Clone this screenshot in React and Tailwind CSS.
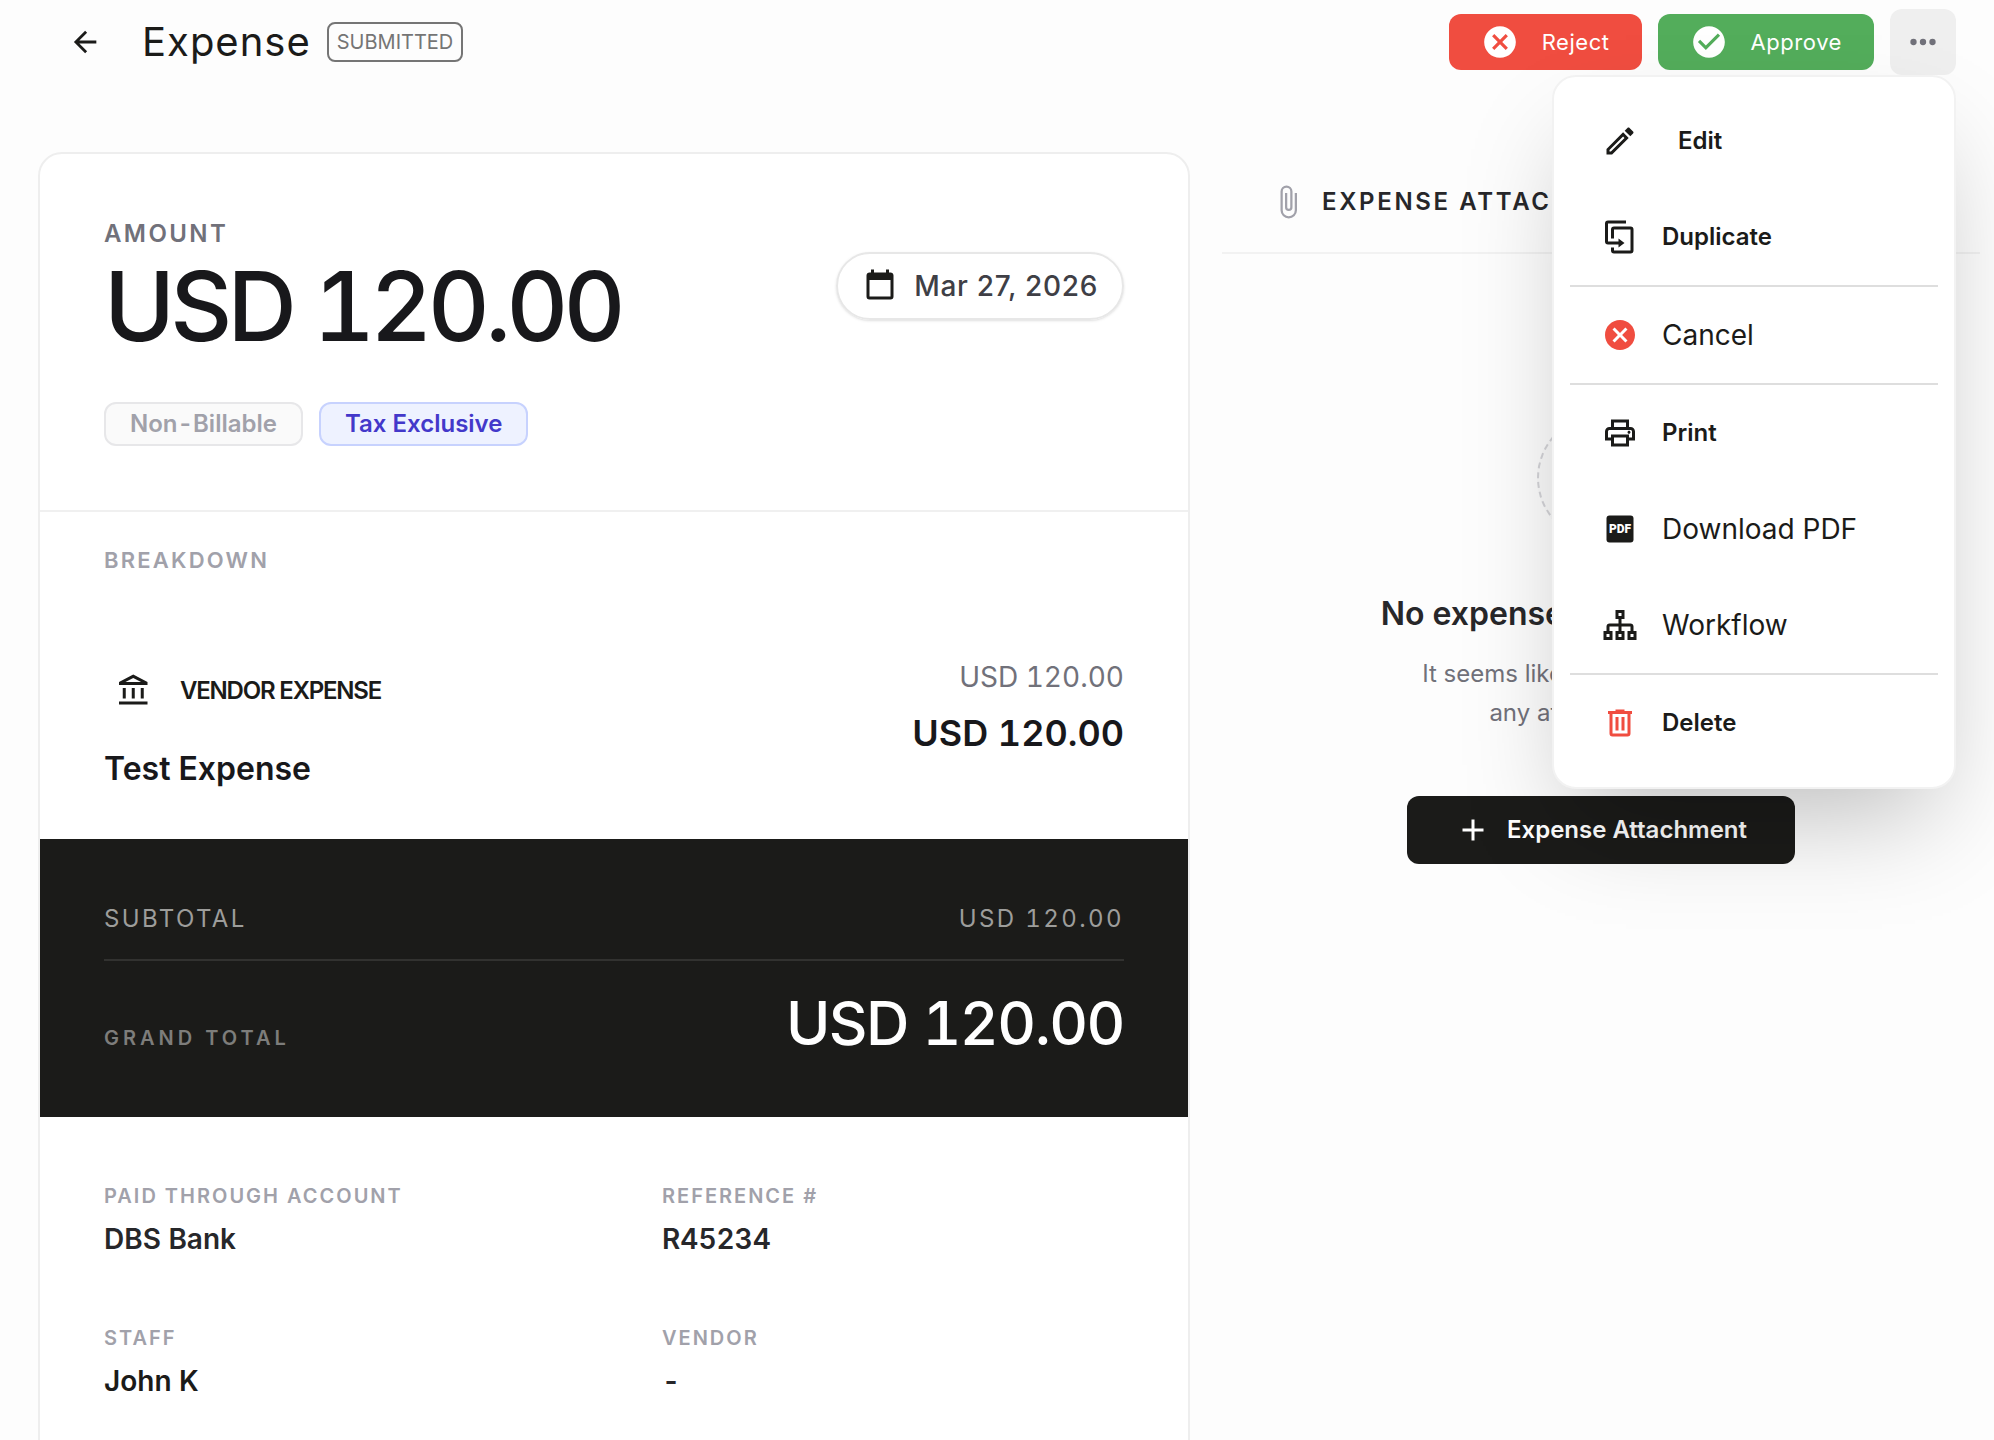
import clsx from 'clsx'

const icons = {
  arrowLeft: 'M20,11V13H8L13.5,18.5L12.08,19.92L4.16,12L12.08,4.08L13.5,5.5L8,11H20Z',
  closeCircle:
    'M12,2C17.53,2 22,6.47 22,12C22,17.53 17.53,22 12,22C6.47,22 2,17.53 2,12C2,6.47 6.47,2 12,2M15.59,7L12,10.59L8.41,7L7,8.41L10.59,12L7,15.59L8.41,17L12,13.41L15.59,17L17,15.59L13.41,12L17,8.41L15.59,7Z',
  checkCircle:
    'M12 2C6.5 2 2 6.5 2 12S6.5 22 12 22 22 17.5 22 12 17.5 2 12 2M10 17L5 12L6.41 10.59L10 14.17L17.59 6.58L19 8L10 17Z',
  dots: 'M16,12A2,2 0 0,1 18,10A2,2 0 0,1 20,12A2,2 0 0,1 18,14A2,2 0 0,1 16,12M10,12A2,2 0 0,1 12,10A2,2 0 0,1 14,12A2,2 0 0,1 12,14A2,2 0 0,1 10,12M4,12A2,2 0 0,1 6,10A2,2 0 0,1 8,12A2,2 0 0,1 6,14A2,2 0 0,1 4,12Z',
  pencil:
    'M14.06,9L15,9.94L5.92,19H5V18.08L14.06,9M17.66,3C17.41,3 17.15,3.1 16.96,3.29L15.13,5.12L18.88,8.87L20.71,7.04C21.1,6.65 21.1,6 20.71,5.63L18.37,3.29C18.17,3.09 17.92,3 17.66,3M14.06,6.19L3,17.25V21H6.75L17.81,9.94L14.06,6.19Z',
  duplicate:
    'M11,17H4A2,2 0 0,1 2,15V3A2,2 0 0,1 4,1H16V3H4V15H11V13L15,16L11,19V17M19,21V7H8V13H6V7A2,2 0 0,1 8,5H19A2,2 0 0,1 21,7V21A2,2 0 0,1 19,23H8A2,2 0 0,1 6,21V19H8V21H19Z',
  printer:
    'M19 8C20.66 8 22 9.34 22 11V17H18V21H6V17H2V11C2 9.34 3.34 8 5 8H6V3H18V8H19M8 5V8H16V5H8M16 19V15H8V19H16M18 15H20V11C20 10.45 19.55 10 19 10H5C4.45 10 4 10.45 4 11V15H6V13H18V15M19 11.5C19 12.05 18.55 12.5 18 12.5C17.45 12.5 17 12.05 17 11.5C17 10.95 17.45 10.5 18 10.5C18.55 10.5 19 10.95 19 11.5Z',
  sitemap:
    'M9,2V8H11V11H5C3.89,11 3,11.89 3,13V16H1V22H7V16H5V13H11V16H9V22H15V16H13V13H19V16H17V22H23V16H21V13C21,11.89 20.11,11 19,11H13V8H15V2H9M11,4H13V6H11V4M3,18H5V20H3V18M11,18H13V20H11V18M19,18H21V20H19V18Z',
  trash:
    'M9,3V4H4V6H5V19A2,2 0 0,0 7,21H17A2,2 0 0,0 19,19V6H20V4H15V3H9M7,6H17V19H7V6M9,8V17H11V8H9M13,8V17H15V8H13Z',
  bank: 'M6.5,10H4.5V17H6.5V10M12.5,10H10.5V17H12.5V10M21,19H2V21H21V19M18.5,10H16.5V17H18.5V10M11.5,3.26L16.71,6H6.29L11.5,3.26M11.5,1L2,6V8H21V6L11.5,1Z',
  calendar:
    'M19,19H5V8H19M16,1V3H8V1H6V3H5C3.89,3 3,3.89 3,5V19A2,2 0 0,0 5,21H19A2,2 0 0,0 21,19V5C21,3.89 20.1,3 19,3H18V1',
  paperclip:
    'M16.5,6V17.5A4,4 0 0,1 12.5,21.5A4,4 0 0,1 8.5,17.5V5A2.5,2.5 0 0,1 11,2.5A2.5,2.5 0 0,1 13.5,5V15.5A1,1 0 0,1 12.5,16.5A1,1 0 0,1 11.5,15.5V6H10V15.5A2.5,2.5 0 0,0 12.5,18A2.5,2.5 0 0,0 15,15.5V5A4,4 0 0,0 11,1A4,4 0 0,0 7,5V17.5A5.5,5.5 0 0,0 12.5,23A5.5,5.5 0 0,0 18,17.5V6H16.5Z',
  plus: 'M19,13H13V19H11V13H5V11H11V5H13V11H19V13Z',
}

function Icon({ name, className = 'size-9' }) {
  return (
    <svg viewBox="0 0 24 24" fill="currentColor" fillRule="evenodd" className={clsx('shrink-0', className)} aria-hidden="true">
      <path d={icons[name]} />
    </svg>
  )
}

function PdfIcon() {
  return (
    <svg viewBox="0 0 24 24" className="size-9 shrink-0" aria-hidden="true">
      <rect x="3" y="3" width="18" height="18" rx="2" fill="#1b1b19" />
      <text x="12" y="14.8" textAnchor="middle" fill="#fff" fontFamily="Roboto" fontWeight="900" fontSize="8">
        PDF
      </text>
    </svg>
  )
}

const menuGroups = [
  [
    { label: 'Edit', icon: 'pencil', bold: true, indent: true },
    { label: 'Duplicate', icon: 'duplicate', bold: true },
  ],
  [{ label: 'Cancel', icon: 'closeCircle', danger: true }],
  [
    { label: 'Print', icon: 'printer', bold: true },
    { label: 'Download PDF', icon: 'pdf' },
    { label: 'Workflow', icon: 'sitemap' },
  ],
  [{ label: 'Delete', icon: 'trash', bold: true, danger: true }],
]

const details = [
  { label: 'Paid Through Account', value: 'DBS Bank' },
  { label: 'Reference #', value: 'R45234' },
  { label: 'Staff', value: 'John K', strong: true },
  { label: 'Vendor', value: '-' },
]

function ActionMenu() {
  return (
    <div
      role="menu"
      className="absolute top-full right-0 z-10 w-[404px] rounded-3xl border-2 border-[#f2f2f2] bg-white p-4 shadow-[0_50px_100px_-24px_rgba(0,0,0,0.25)]"
    >
      {menuGroups.map((group, i) => (
        <div key={i} className={clsx(i > 0 && 'border-t-2 border-[#dedede]')}>
          {group.map((item) => (
            <button key={item.label} role="menuitem" className="flex h-24 w-full items-center gap-6 px-8">
              {item.icon === 'pdf' ? (
                <PdfIcon />
              ) : (
                <Icon name={item.icon} className={clsx('size-9', item.danger && 'text-[#f04d40]')} />
              )}
              <span className={clsx(item.bold ? 'text-2xl font-semibold' : 'text-[28px]', item.indent && 'pl-4')}>
                {item.label}
              </span>
            </button>
          ))}
        </div>
      ))}
    </div>
  )
}

function Header() {
  return (
    <header className="flex items-center justify-between pr-6 pl-[30px]">
      <div className="flex items-center">
        <button aria-label="Back">
          <Icon name="arrowLeft" className="size-[34px]" />
        </button>
        <h1 className="ml-10 text-[40px] leading-[48px] tracking-wide">Expense</h1>
        <span className="ml-4 flex h-10 items-center rounded-lg border-2 border-[#757575] px-2 text-xl text-[#757575]">
          SUBMITTED
        </span>
      </div>
      <div className="flex items-center gap-4 text-[22px] tracking-wide text-white">
        <button className="flex h-14 items-center gap-[23px] rounded-xl bg-[#f04d40] px-8">
          <Icon name="closeCircle" className="size-[38px]" />
          Reject
        </button>
        <button className="flex h-14 items-center gap-[23px] rounded-xl bg-[#53ad5b] px-8">
          <Icon name="checkCircle" className="size-[38px]" />
          Approve
        </button>
        <div className="relative tracking-normal text-[#1b1b19]">
          <button aria-label="More actions" className="flex size-[66px] items-center justify-center rounded-xl bg-[#efefef] text-[#71717a]">
            <Icon name="dots" className="size-[38px]" />
          </button>
          <ActionMenu />
        </div>
      </div>
    </header>
  )
}

function ExpenseCard() {
  return (
    <section className="min-w-0 overflow-hidden rounded-3xl border-2 border-[#eeeeee] bg-white">
      <div className="border-b-2 border-[#f0f0f0] p-16">
        <div className="flex items-center justify-between">
          <div>
            <p className="text-2xl leading-8 font-semibold tracking-widest text-[#71717a] uppercase">Amount</p>
            <p className="mt-2 text-8xl leading-none font-medium tracking-tighter text-[#18181b] tabular-nums">USD 120.00</p>
          </div>
          <div className="flex h-[68px] items-center gap-4 rounded-full border-2 border-[#e7e7e7] px-6 shadow-sm">
            <Icon name="calendar" />
            <time dateTime="2026-03-27" className="text-[28px] font-medium tracking-wide text-[#3f3f46]">
              Mar 27, 2026
            </time>
          </div>
        </div>
        <div className="mt-12 flex gap-4 text-2xl font-semibold">
          <span className="flex h-11 items-center rounded-xl border-2 border-[#e7e7e9] bg-[#fafafa] px-6 text-[#a1a1aa] tabular-nums">
            Non-Billable
          </span>
          <span className="flex h-11 items-center rounded-xl border-2 border-[#c7d2fe] bg-[#eef2ff] px-6 text-[#4338ca]">
            Tax Exclusive
          </span>
        </div>
      </div>

      <div className="px-16 pt-8 pb-[46px]">
        <h2 className="text-[22px] leading-8 font-semibold tracking-widest text-[#a1a1aa] uppercase">Breakdown</h2>
        <div className="mt-[81px] flex items-start justify-between">
          <div className="pt-4">
            <div className="flex items-center gap-7 pl-3">
              <Icon name="bank" />
              <span className="text-2xl font-semibold tracking-tighter uppercase">Vendor Expense</span>
            </div>
            <p className="mt-9 text-[32px] leading-[48px] font-semibold text-[#18181b]">Test Expense</p>
          </div>
          <div className="flex flex-col gap-3 text-right tabular-nums">
            <span className="text-[28px] leading-10 text-[#71717a]">USD 120.00</span>
            <span className="text-4xl leading-[48px] font-semibold text-[#18181b]">USD 120.00</span>
          </div>
        </div>
      </div>

      <div className="bg-[#1b1b19] p-16 text-white">
        <div className="flex justify-between border-b-2 border-[#323230] pb-6 text-2xl leading-8 tracking-widest text-[#9d9d9b]">
          <span>SUBTOTAL</span>
          <span className="tabular-nums">USD 120.00</span>
        </div>
        <div className="flex items-end justify-between pt-8">
          <span className="text-xl leading-[30px] font-semibold tracking-[0.2em] text-[#7d7d7b]">GRAND TOTAL</span>
          <span className="text-6xl leading-none font-medium tracking-tight tabular-nums">USD 120.00</span>
        </div>
      </div>

      <dl className="grid grid-cols-2 gap-x-24 gap-y-16 p-16">
        {details.map((d) => (
          <div key={d.label}>
            <dt className="text-xl leading-[30px] font-semibold tracking-widest text-[#a1a1aa] uppercase">{d.label}</dt>
            <dd
              className={clsx(
                'mt-2 text-[28px] leading-10 font-semibold tabular-nums',
                d.strong ? 'text-[#1b1b19]' : 'text-[#27272a]'
              )}
            >
              {d.value}
            </dd>
          </div>
        ))}
      </dl>
    </section>
  )
}

function Attachments() {
  return (
    <aside className="min-w-0">
      <div className="flex items-center gap-4 border-b-2 border-[#f2f2f2] px-12 py-8">
        <Icon name="paperclip" className="size-9 text-[#a1a1aa]" />
        <h2 className="text-2xl leading-9 font-semibold tracking-[0.11em] whitespace-nowrap text-[#27272a] uppercase">
          Expense Attachments
        </h2>
      </div>
      <div className="flex flex-col items-center pt-40 text-center">
        <div className="flex size-32 items-center justify-center rounded-full border-2 border-dashed border-[#d4d4d8] bg-[#fafafa]">
          <Icon name="paperclip" className="size-14 text-[#a1a1aa]" />
        </div>
        <h3 className="mt-12 text-[32px] leading-[48px] font-semibold text-[#27272a]">No expense attachments yet</h3>
        <p className="mt-4 text-2xl leading-[39px] text-[#71717a]">
          It seems like you haven't added
          <br />
          any attachment yet.
        </p>
        <button className="mt-16 flex h-[68px] items-center gap-4 rounded-xl bg-[#1b1b19] px-12 text-2xl font-semibold text-white">
          <Icon name="plus" />
          Expense Attachment
        </button>
      </div>
    </aside>
  )
}

export default function App() {
  return (
    <div className="min-h-screen bg-[#fdfdfd] pt-[9px] pr-3.5 pl-[38px] font-['Inter',sans-serif] text-[#1b1b19]">
      <Header />
      <main className="mt-[77px] grid grid-cols-[1152fr_758fr] gap-8">
        <ExpenseCard />
        <Attachments />
      </main>
    </div>
  )
}
